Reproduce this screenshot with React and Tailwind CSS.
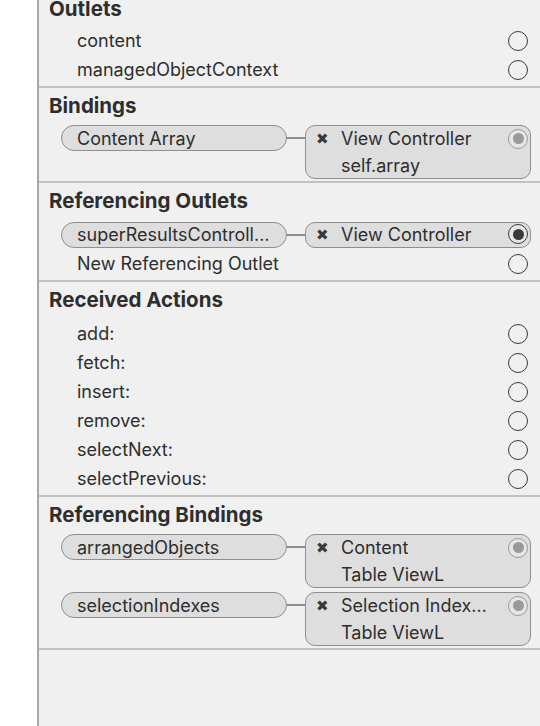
const font = { fontFamily: "Inter, 'Noto Sans', sans-serif" };

function Radio({ state = "empty" }) {
  if (state === "empty") {
    return <div className="w-[20px] h-[20px] rounded-full border-[1.5px] border-[#3a3a3a] shrink-0" />;
  }
  const dark = state === "dark";
  return (
    <div
      className={
        "w-[20px] h-[20px] rounded-full border-[1.5px] flex items-center justify-center shrink-0 bg-[#e6e6e6] " +
        (dark ? "border-[#3a3a3a]" : "border-[#9a9a9a]")
      }
    >
      <div className={"w-[11px] h-[11px] rounded-full " + (dark ? "bg-[#3a3a3a]" : "bg-[#9a9a9a]")} />
    </div>
  );
}

function Header({ children, first }) {
  return (
    <div
      className={
        "h-[28px] flex items-center pl-[10px] text-[20.5px] font-bold text-[#2e2e2e] whitespace-nowrap " +
        (first ? "mt-[2px] mb-[3px]" : "mb-[5px]")
      }
    >
      {children}
    </div>
  );
}

function Row({ label }) {
  return (
    <div className="h-[29px] flex items-center pl-[38px] pr-[12px]">
      <span className="flex-1 text-[18px] text-[#2e2e2e] whitespace-nowrap">{label}</span>
      <Radio />
    </div>
  );
}

function Connection({ from, target, sub, radio = "grey", spaced }) {
  const tall = Boolean(sub);
  return (
    <div
      className={
        "flex pl-[22px] " +
        (tall ? "items-start h-[54px]" : "items-center h-[29px]") +
        (spaced ? " mt-[4px]" : "")
      }
    >
      <div className="w-[226px] h-[26px] rounded-full border-[1.5px] border-[#8e8e8e] bg-[#dedede] flex items-center pl-[15px] text-[18px] text-[#2e2e2e] shrink-0 whitespace-nowrap">
        {from}
      </div>
      <div className={"w-[18px] h-[2px] bg-[#8e8e8e] shrink-0" + (tall ? " mt-[12px]" : "")} />
      <div
        className={
          "w-[226px] rounded-[10px] border-[1.5px] border-[#8e8e8e] bg-[#dedede] shrink-0 " +
          (tall ? "h-[54px]" : "h-[26px]")
        }
      >
        <div className={"flex items-center pl-[10px] pr-[2px] " + (tall ? "h-[25px]" : "h-[23px]")}>
          <span className="w-[25px] text-[15px] leading-none text-[#3a3a3a]">✖</span>
          <span className="flex-1 text-[18px] text-[#2e2e2e] whitespace-nowrap">{target}</span>
          <Radio state={radio} />
        </div>
        {tall && (
          <div className="h-[28px] flex items-center pl-[35px] text-[18px] text-[#2e2e2e] whitespace-nowrap">
            {sub}
          </div>
        )}
      </div>
    </div>
  );
}

function Section({ title, children, first }) {
  return (
    <div
      className={
        "border-t-[2px] pt-[4px] pb-[2px] " +
        (first ? "-mt-[13px] border-transparent" : "border-[#c2c2c2]")
      }
    >
      <Header first={first}>{title}</Header>
      {children}
    </div>
  );
}

export default function App() {
  return (
    <div className="w-[540px] h-[726px] flex bg-white overflow-hidden" style={font}>
      <div className="w-[37px] bg-white" />
      <div className="flex-1 border-l-[2px] border-[#a8a8a8] bg-[#f0f0f0] overflow-hidden">
        <Section title="Outlets" first>
          <Row label="content" />
          <Row label="managedObjectContext" />
        </Section>

        <Section title="Bindings">
          <Connection from="Content Array" target="View Controller" sub="self.array" />
        </Section>

        <Section title="Referencing Outlets">
          <Connection from="superResultsControll…" target="View Controller" radio="dark" />
          <Row label="New Referencing Outlet" />
        </Section>

        <Section title="Received Actions">
          <Row label="add:" />
          <Row label="fetch:" />
          <Row label="insert:" />
          <Row label="remove:" />
          <Row label="selectNext:" />
          <Row label="selectPrevious:" />
        </Section>

        <Section title="Referencing Bindings">
          <Connection from="arrangedObjects" target="Content" sub="Table ViewL" />
          <Connection from="selectionIndexes" target="Selection Index…" sub="Table ViewL" spaced />
        </Section>

        <div className="border-t-[2px] border-[#c2c2c2]" />
      </div>
    </div>
  );
}
